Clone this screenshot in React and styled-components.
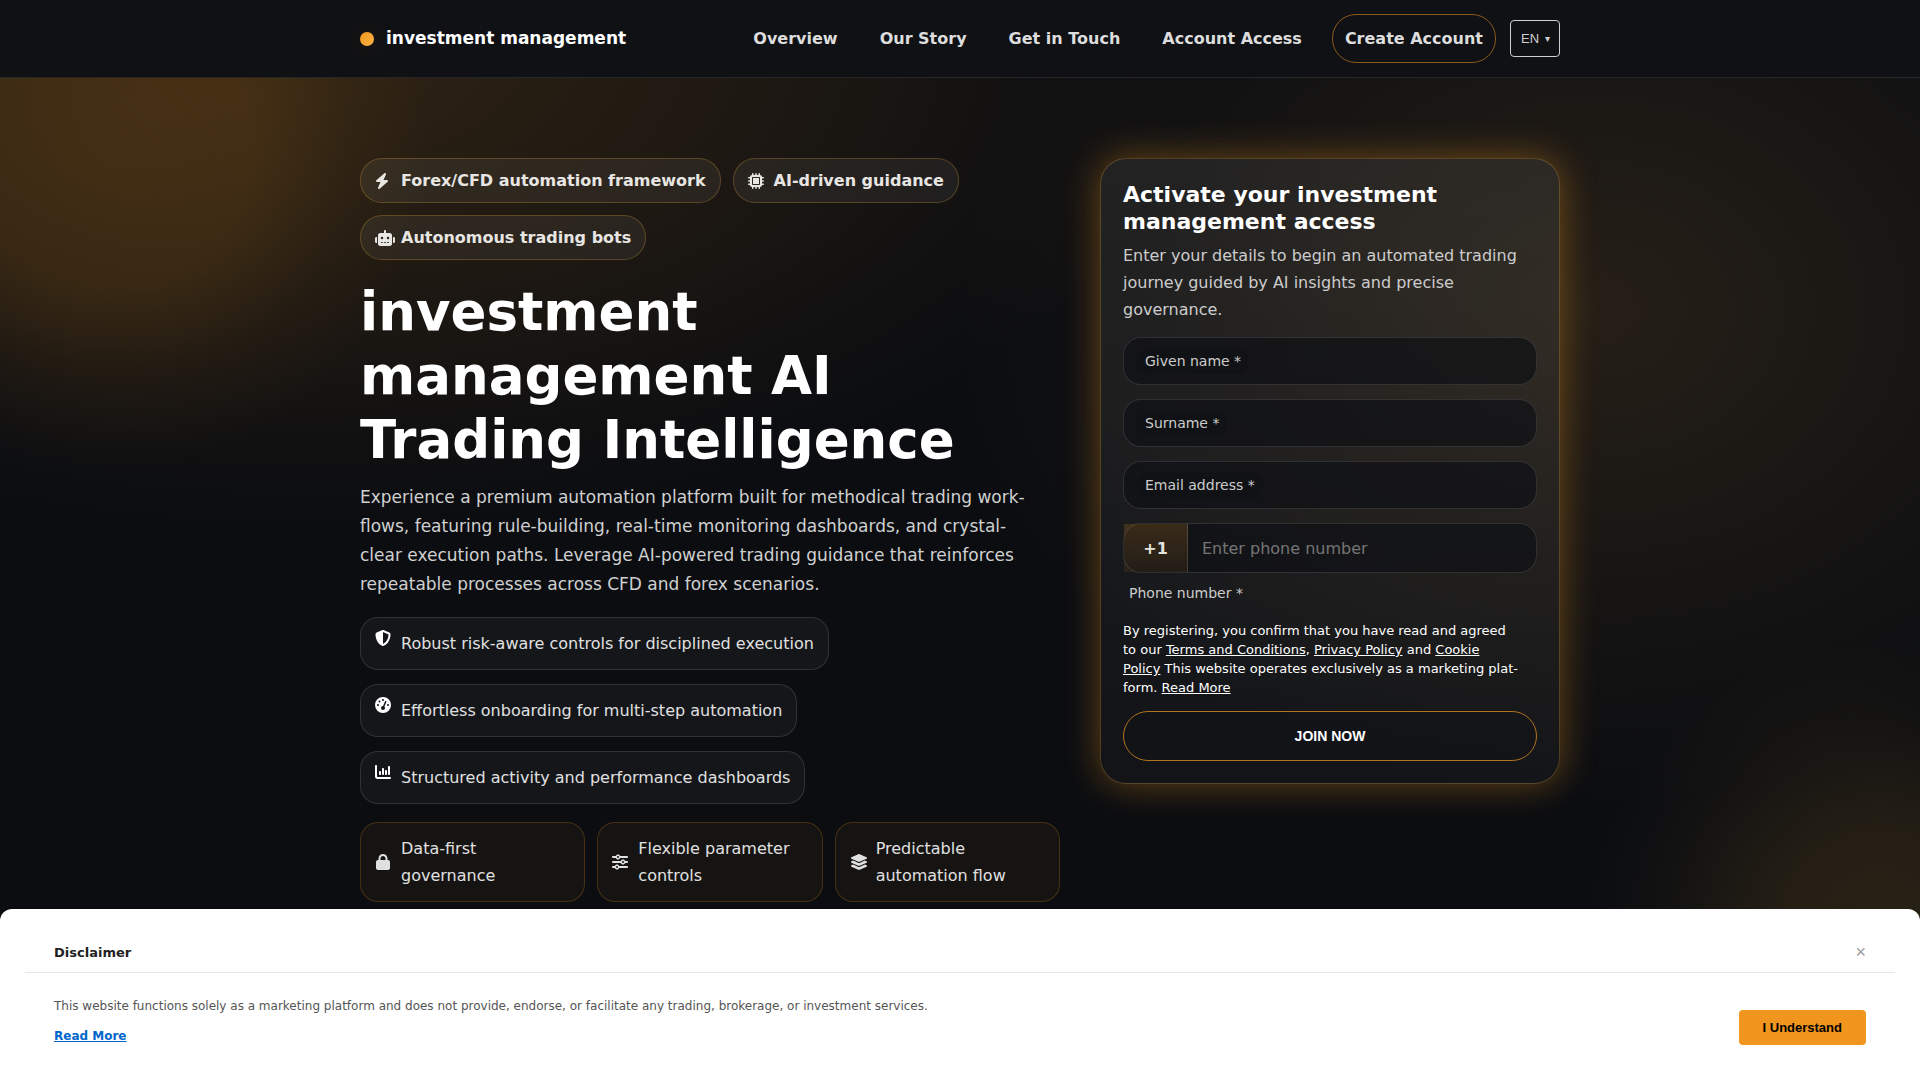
import React from "react";
import styled, { createGlobalStyle } from "styled-components";
import {
  FaBolt,
  FaMicrochip,
  FaRobot,
  FaShieldHalved,
  FaGaugeHigh,
  FaChartColumn,
  FaLock,
  FaSliders,
  FaLayerGroup,
} from "react-icons/fa6";

const GlobalStyle = createGlobalStyle`
  * {
    box-sizing: border-box;
  }

  body {
    margin: 0;
    background: #0b0d11;
    color: #e0e0e0;
    font-family: "DejaVu Sans", Verdana, sans-serif;
    font-size: 16px;
    line-height: 27px;
  }

  h1, h2, p, ul {
    margin: 0;
    padding: 0;
  }
`;

const Page = styled.div`
  min-height: 100vh;
  background:
    radial-gradient(circle at 110px 150px, rgba(240, 150, 30, 0.15) 0, rgba(240, 150, 30, 0.13) 140px, rgba(240, 150, 30, 0.04) 240px, rgba(240, 150, 30, 0) 320px),
    radial-gradient(circle at 1880px 930px, rgba(240, 170, 50, 0.13) 0, rgba(240, 170, 50, 0.11) 100px, rgba(240, 170, 50, 0.03) 220px, rgba(240, 170, 50, 0) 290px),
    radial-gradient(ellipse 900px 470px at 16% 5%, rgba(240, 150, 30, 0.16), rgba(240, 150, 30, 0)),
    radial-gradient(ellipse 640px 500px at 83% 28%, rgba(255, 179, 71, 0.11), rgba(255, 179, 71, 0)),
    #0b0d11;
`;

const Header = styled.header`
  position: sticky;
  top: 0;
  z-index: 2;
  background: rgb(15, 17, 21);
  border-bottom: 1px solid rgb(36, 38, 40);
`;

const HeaderInner = styled.div`
  display: flex;
  align-items: center;
  gap: 14px;
  max-width: 1200px;
  height: 77px;
  margin: 0 auto;
`;

const Brand = styled.a`
  display: flex;
  align-items: center;
  gap: 12px;
  margin-right: auto;
  color: #fff;
  font-size: 17px;
  font-weight: bold;
  text-decoration: none;
`;

const BrandDot = styled.span`
  width: 14px;
  height: 14px;
  border-radius: 50%;
  background: linear-gradient(135deg, #f0961e, #ffb347);
  box-shadow: 0 0 24px rgba(240, 150, 30, 0.2);
`;

const Nav = styled.nav`
  display: flex;
  align-items: center;
  gap: 18px;
`;

const NavLink = styled.a`
  padding: 10px 12px;
  border: ${(props) => (props.$outlined ? "1px solid rgb(140, 89, 24)" : "0")};
  border-radius: 24px;
  color: #dddddd;
  font-weight: bold;
  text-decoration: none;
`;

const Language = styled.label`
  display: grid;
  align-items: center;
  width: 50px;
  height: 37px;
  border: 1px solid #cfcfcf;
  border-radius: 4px;
  color: #cfcfcf;

  > * {
    grid-area: 1 / 1;
  }
`;

const LanguageSelect = styled.select`
  height: 100%;
  padding: 0 10px;
  border: 0;
  background: transparent;
  color: inherit;
  font: 13px "Liberation Sans", Arial, sans-serif;
  appearance: none;
`;

const Caret = styled.span`
  justify-self: end;
  padding-right: 9px;
  font-size: 10px;
  pointer-events: none;
`;

const Hero = styled.main`
  display: grid;
  grid-template-columns: minmax(0, 1fr) 460px;
  align-items: start;
  gap: 40px;
  max-width: 1200px;
  margin: 0 auto;
  padding: 80px 0 200px;
`;

const Intro = styled.div`
  display: flex;
  flex-direction: column;
  gap: 18px;
`;

const PillRow = styled.div`
  display: flex;
  flex-wrap: wrap;
  gap: 12px;
`;

const Pill = styled.span`
  display: flex;
  align-items: center;
  gap: 10px;
  padding: 8px 14px;
  border: 1px solid rgba(240, 170, 60, 0.25);
  border-radius: 22px;
  background: rgba(255, 255, 255, 0.06);
  color: #e8e6e3;
  font-weight: bold;
`;

/* the box keeps the texts aligned, wider glyphs run into the gap */
const IconBox = styled.span`
  display: flex;
  flex: none;
  width: 16px;
  color: ${(props) => (props.$bright ? "#fff" : "inherit")};

  svg {
    flex: none;
    width: ${(props) => props.$glyph || 16}px;
    height: 16px;
  }
`;

const Headline = styled.div`
  display: flex;
  flex-direction: column;
  gap: 11px;
  padding-top: 2px;
`;

const Title = styled.h1`
  max-width: 640px;
  color: #fff;
  font-size: 53px;
  line-height: 64px;
`;

const Lead = styled.p`
  max-width: 680px;
  color: #d0d0d0;
  font-size: 17px;
  line-height: 29px;
`;

const FeatureList = styled.ul`
  display: flex;
  flex-direction: column;
  align-items: flex-start;
  gap: 14px;
  list-style: none;
`;

const Feature = styled.li`
  display: flex;
  align-items: flex-start;
  gap: 10px;
  padding: 12px 14px;
  border: 1px solid rgba(255, 255, 255, 0.12);
  border-radius: 18px;
  background: rgba(255, 255, 255, 0.04);
`;

const TileGrid = styled.div`
  display: grid;
  grid-template-columns: repeat(3, 1fr);
  gap: 12px;
`;

const Tile = styled.div`
  display: flex;
  align-items: center;
  gap: 10px;
  padding: 12px 14px;
  border: 1px solid rgba(240, 150, 30, 0.22);
  border-radius: 18px;
  background: rgba(240, 150, 30, 0.05);
`;

const SignupCard = styled.form`
  display: flex;
  flex-direction: column;
  gap: 14px;
  padding: 22px;
  border: 1px solid rgba(240, 170, 60, 0.28);
  border-radius: 26px;
  background: linear-gradient(180deg, rgba(255, 255, 255, 0.07), rgba(255, 255, 255, 0.03));
  box-shadow: 0 0 36px rgba(240, 150, 30, 0.4);
`;

const CardTitle = styled.h2`
  margin-bottom: 7px;
  color: #fff;
  font-size: 22px;
  line-height: 27px;
`;

const CardText = styled.p`
  color: #cccccc;
`;

const Field = styled.div`
  display: grid;
  align-items: center;

  > * {
    grid-area: 1 / 1;
  }
`;

const FieldInput = styled.input`
  width: 100%;
  height: 48px;
  padding: 0 14px;
  border: 1px solid rgba(255, 255, 255, 0.12);
  border-radius: 18px;
  background: rgba(15, 17, 21, 0.72);
  color: #fff;
  font: inherit;
`;

const FieldLabel = styled.label`
  justify-self: start;
  margin-left: 14px;
  padding: 0 8px;
  border-radius: 12px;
  background: rgba(15, 17, 21, 0.7);
  color: #cccccc;
  font-size: 14px;
  line-height: 25px;
`;

const PhoneField = styled.div`
  display: flex;
  height: 50px;
  border: 1px solid rgba(255, 255, 255, 0.12);
  border-radius: 18px;
  background: rgba(15, 17, 21, 0.72);
`;

const DialCode = styled.span`
  display: flex;
  align-items: center;
  justify-content: center;
  width: 64px;
  border-right: 1px solid rgba(255, 255, 255, 0.14);
  background: linear-gradient(180deg, rgba(240, 150, 30, 0.18), rgba(240, 150, 30, 0.08));
  color: #e6e3df;
  font-weight: bold;
`;

const PhoneInput = styled.input`
  flex: 1;
  min-width: 0;
  padding: 0 14px;
  border: 0;
  background: transparent;
  color: #fff;
  font: inherit;

  &::placeholder {
    color: #757575;
  }
`;

const PhoneLabel = styled.label`
  margin-top: -7px;
  padding-left: 6px;
  color: #cccccc;
  font-size: 14px;
`;

const Terms = styled.p`
  padding-right: 18px;
  color: #fff;
  font-size: 13px;
  line-height: 19px;

  a {
    color: inherit;
  }
`;

const JoinButton = styled.button`
  height: 50px;
  border: 1px solid rgb(180, 116, 30);
  border-radius: 25px;
  background: rgba(15, 17, 21, 0.5);
  color: #fff;
  font: bold 14px "Liberation Sans", Arial, sans-serif;
`;

const Disclaimer = styled.section`
  position: fixed;
  right: 0;
  bottom: 0;
  left: 0;
  z-index: 3;
  padding: 24px 25px 35px;
  border-radius: 12px 12px 0 0;
  background: #fff;
`;

const DisclaimerHead = styled.div`
  display: flex;
  align-items: center;
  justify-content: space-between;
  height: 40px;
  padding: 0 29px;
  border-bottom: 1px solid #e8e8e8;
  color: #222;
`;

const DisclaimerTitle = styled.h2`
  font-size: 13px;
`;

const CloseButton = styled.button`
  padding: 0;
  border: 0;
  background: transparent;
  color: #999;
  font: 18px "Liberation Sans", Arial, sans-serif;
`;

const DisclaimerBody = styled.div`
  display: flex;
  align-items: flex-end;
  justify-content: space-between;
  padding: 24px 29px 0;
  color: #555;
  font-size: 12px;
  line-height: 18px;
`;

const DisclaimerLink = styled.a`
  display: inline-block;
  margin-top: 12px;
  color: #0066cc;
  font-weight: bold;
`;

const AcceptButton = styled.button`
  height: 35px;
  padding: 0 24px;
  border: 0;
  border-radius: 4px;
  background: #f0961e;
  color: #000;
  font: bold 13px "Liberation Sans", Arial, sans-serif;
`;

const links = ["Overview", "Our Story", "Get in Touch", "Account Access"];

const pills = [
  { icon: FaBolt, glyph: 14, text: "Forex/CFD automation framework" },
  { icon: FaMicrochip, text: "AI-driven guidance" },
  { icon: FaRobot, glyph: 20, text: "Autonomous trading bots" },
];

const features = [
  { icon: FaShieldHalved, text: "Robust risk-aware controls for disciplined execution" },
  { icon: FaGaugeHigh, text: "Effortless onboarding for multi-step automation" },
  { icon: FaChartColumn, text: "Structured activity and performance dashboards" },
];

const tiles = [
  { icon: FaLock, text: "Data-first governance" },
  { icon: FaSliders, text: "Flexible parameter controls" },
  { icon: FaLayerGroup, glyph: 18, text: "Predictable automation flow" },
];

const fields = [
  { id: "given-name", type: "text", label: "Given name *" },
  { id: "surname", type: "text", label: "Surname *" },
  { id: "email", type: "email", label: "Email address *" },
];

const App = () => {
  return (
    <Page>
      <GlobalStyle />
      <Header>
        <HeaderInner>
          <Brand href="#">
            <BrandDot />
            investment management
          </Brand>
          <Nav>
            {links.map((link) => (
              <NavLink href="#" key={link}>
                {link}
              </NavLink>
            ))}
            <NavLink href="#" $outlined>
              Create Account
            </NavLink>
          </Nav>
          <Language>
            <LanguageSelect aria-label="Language">
              <option>EN</option>
            </LanguageSelect>
            <Caret>▾</Caret>
          </Language>
        </HeaderInner>
      </Header>

      <Hero>
        <Intro>
          <PillRow>
            {pills.map(({ icon: Icon, glyph, text }) => (
              <Pill key={text}>
                <IconBox $glyph={glyph}>
                  <Icon />
                </IconBox>
                {text}
              </Pill>
            ))}
          </PillRow>
          <Headline>
            <Title>investment management AI Trading Intelligence</Title>
            <Lead>
              Experience a premium automation platform built for methodical trading
              work&shy;flows, featuring rule-building, real-time monitoring dashboards, and
              crystal-clear execution paths. Leverage AI-powered trading guidance that
              reinforces repeatable processes across CFD and forex scenarios.
            </Lead>
          </Headline>
          <FeatureList>
            {features.map(({ icon: Icon, text }) => (
              <Feature key={text}>
                <IconBox $bright>
                  <Icon />
                </IconBox>
                {text}
              </Feature>
            ))}
          </FeatureList>
          <TileGrid>
            {tiles.map(({ icon: Icon, glyph, text }) => (
              <Tile key={text}>
                <IconBox $glyph={glyph}>
                  <Icon />
                </IconBox>
                {text}
              </Tile>
            ))}
          </TileGrid>
        </Intro>

        <SignupCard>
          <div>
            <CardTitle>Activate your investment management access</CardTitle>
            <CardText>
              Enter your details to begin an automated trading journey guided by AI
              insights and precise governance.
            </CardText>
          </div>
          {fields.map((field) => (
            <Field key={field.id}>
              <FieldInput id={field.id} type={field.type} />
              <FieldLabel htmlFor={field.id}>{field.label}</FieldLabel>
            </Field>
          ))}
          <PhoneField>
            <DialCode>+1</DialCode>
            <PhoneInput id="phone" type="tel" placeholder="Enter phone number" />
          </PhoneField>
          <PhoneLabel htmlFor="phone">Phone number *</PhoneLabel>
          <Terms>
            By registering, you confirm that you have read and agreed to our{" "}
            <a href="#">Terms and Conditions</a>, <a href="#">Privacy Policy</a> and{" "}
            <a href="#">Cookie Policy</a> This website operates exclusively as a marketing
            plat&shy;form. <a href="#">Read More</a>
          </Terms>
          <JoinButton type="button">JOIN NOW</JoinButton>
        </SignupCard>
      </Hero>

      <Disclaimer>
        <DisclaimerHead>
          <DisclaimerTitle>Disclaimer</DisclaimerTitle>
          <CloseButton aria-label="Close">×</CloseButton>
        </DisclaimerHead>
        <DisclaimerBody>
          <div>
            <p>
              This website functions solely as a marketing platform and does not provide,
              endorse, or facilitate any trading, brokerage, or investment services.
            </p>
            <DisclaimerLink href="#">Read More</DisclaimerLink>
          </div>
          <AcceptButton>I Understand</AcceptButton>
        </DisclaimerBody>
      </Disclaimer>
    </Page>
  );
};

export default App;
